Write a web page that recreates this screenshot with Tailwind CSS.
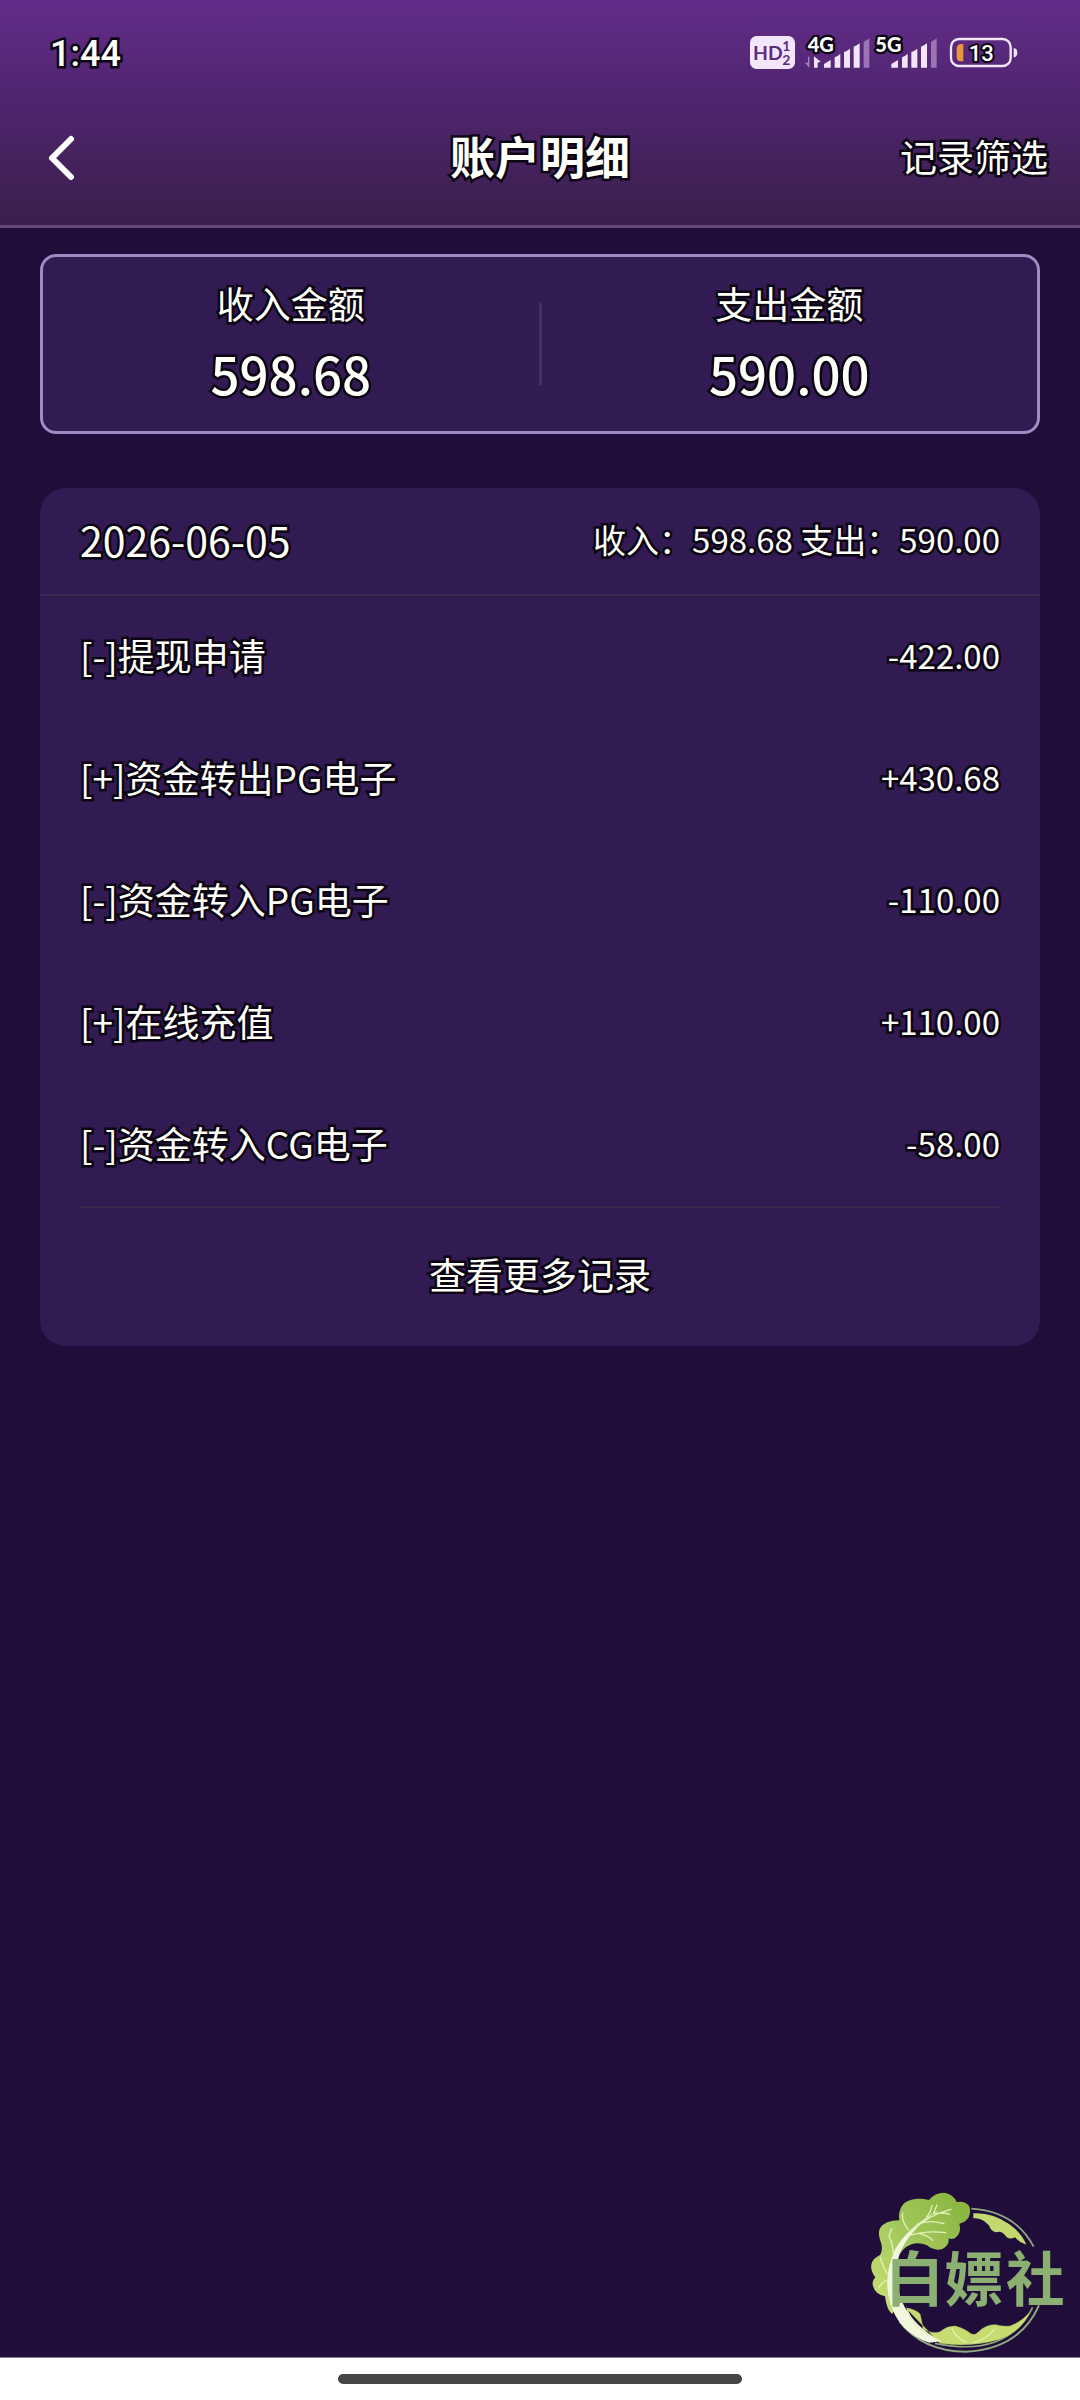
<!DOCTYPE html>
<html lang="zh-CN">
<head>
    <meta charset="UTF-8">
    <meta name="viewport" content="width=device-width, initial-scale=1.0">
    <title>账户明细</title>
    <script src="https://cdn.jsdelivr.net/npm/@tailwindcss/browser@4"></script>
</head>
<body class="bg-[#210d3a] text-[#fffffa] font-['Noto_Sans_CJK_SC',sans-serif]">
<div class="relative min-h-screen flex flex-col [-webkit-text-stroke:5px_#0b0612] [paint-order:stroke_fill] [stroke-linejoin:round]">

    <header class="bg-linear-to-b from-[#622d8a] via-[#4d246b] to-[#3a1f4c] border-b-3 border-[#62467b]">
        <!-- status bar -->
        <div class="h-[90px] flex items-start justify-between pl-[50px] pr-[50px]">
            <span class="mt-8 text-[36px] leading-[44px] font-medium font-[Roboto,sans-serif]">1:44</span>
            <svg class="mt-5 w-[290px] h-[60px] [-webkit-text-stroke:0px]" viewBox="0 0 870 180" fill="#f3e6fa" font-family="Lato, sans-serif" font-weight="700">
                <rect x="30" y="48" width="135" height="99" rx="20"/>
                <g fill="#5b2c7e">
                    <text x="39" y="119" font-size="58">HD</text>
                    <text x="127" y="92" font-size="42">1</text>
                    <text x="127" y="135" font-size="42">2</text>
                </g>
                <!-- data arrows -->
                <path d="M208 110v33l-13-15h9v-18z" fill="#a583bd"/>
                <path d="M222 143v-34l20 16-9 3v15z"/>
                <path d="M252 143v-11l20-12v23zM284 143v-31q9-3 17-11v42zM312 143V96q9-3 18-10v57zM341 143V80q9-3 18-10v73z"/>
                <path d="M371 143V65q8-2 17-10v88z" fill="#9b74b6"/>
                <path d="M454 143v-11l20-12v23zM486 143v-31q9-3 17-11v42zM514 143V96q9-3 18-10v57zM543 143V80q9-3 18-10v73z"/>
                <path d="M573 143V65q8-2 17-10v88z" fill="#9b74b6"/>
                <g fill="#fff" stroke="#0b0612" stroke-width="14" stroke-linejoin="round" paint-order="stroke">
                    <text x="203" y="95" font-size="60" font-weight="900">4G</text>
                    <text x="406" y="95" font-size="60" font-weight="900">5G</text>
                </g>
                <!-- battery -->
                <rect x="633" y="57" width="179" height="81" rx="24" fill="none" stroke="#f3e6fa" stroke-width="7"/>
                <path d="M821 84q11 1 11 14t-11 14z"/>
                <path d="M662 72h8v52h-8q-12-2-12-14V86q0-12 12-14z" fill="#e9973b"/>
                <text x="686" y="122" font-size="66" font-family="Roboto, sans-serif" font-weight="500" fill="#fff" stroke="#0b0612" stroke-width="12" stroke-linejoin="round" paint-order="stroke">13</text>
            </svg>
        </div>
        <!-- nav bar -->
        <div class="h-[135px] grid grid-cols-[1fr_auto_1fr] items-center px-8 pb-1">
            <button class="justify-self-start w-15 h-15 pl-4 pt-1" aria-label="返回">
                <svg class="w-[28px] h-[48px]" viewBox="0 0 28 48" fill="none" stroke="#fff" stroke-width="6" stroke-linecap="round" stroke-linejoin="round">
                    <path d="M23 5L4 24l19 19"/>
                </svg>
            </button>
            <h1 class="text-[45px] leading-[60px] font-bold">账户明细</h1>
            <button class="justify-self-end text-[37px] leading-[54px]">记录筛选</button>
        </div>
    </header>

    <main class="flex-1 px-10 pt-[26px]">
        <!-- totals -->
        <section class="h-[180px] flex items-center rounded-2xl border-3 border-[#a28ac2] bg-[#321a53] text-center">
            <div class="flex-1 pb-1">
                <p class="text-[37px] leading-[54px]">收入金额</p>
                <p class="mt-2 text-[51px] leading-[70px] font-medium">598.68</p>
            </div>
            <div class="w-[3px] h-[84px] rounded-full bg-[#442e65]"></div>
            <div class="flex-1 pb-1">
                <p class="text-[37px] leading-[54px]">支出金额</p>
                <p class="mt-2 text-[51px] leading-[70px] font-medium">590.00</p>
            </div>
        </section>

        <!-- records of one day -->
        <section class="mt-[54px] rounded-[26px] bg-[#321a53]">
            <div class="h-[108px] px-10 pb-1 flex items-center justify-between border-b-2 border-[#3b2750]">
                <h2 class="text-[41px] leading-[56px]">2026-06-05</h2>
                <p class="text-[33px] leading-[48px]">收入：598.68 支出：590.00</p>
            </div>
            <div class="px-10">
                <ul class="border-b-2 border-[#3a294e] text-[37px] leading-[54px]">
                    <li class="h-[122px] pb-1 flex items-center justify-between">
                        <span>[-]提现申请</span>
                        <span class="text-[33px]">-422.00</span>
                    </li>
                    <li class="h-[122px] pb-1 flex items-center justify-between">
                        <span>[+]资金转出PG电子</span>
                        <span class="text-[33px]">+430.68</span>
                    </li>
                    <li class="h-[122px] pb-1 flex items-center justify-between">
                        <span>[-]资金转入PG电子</span>
                        <span class="text-[33px]">-110.00</span>
                    </li>
                    <li class="h-[122px] pb-1 flex items-center justify-between">
                        <span>[+]在线充值</span>
                        <span class="text-[33px]">+110.00</span>
                    </li>
                    <li class="h-[122px] pb-1 flex items-center justify-between">
                        <span>[-]资金转入CG电子</span>
                        <span class="text-[33px]">-58.00</span>
                    </li>
                </ul>
                <button class="w-full h-[138px] pb-1 text-[37px]">查看更多记录</button>
            </div>
        </section>
    </main>

    <!-- cabbage badge -->
    <svg class="absolute right-0 bottom-[43px] w-[220px] h-[177px] [-webkit-text-stroke:0px]" viewBox="0 0 660 531">
        <defs>
            <linearGradient id="leaf" x1="1" y1="0" x2="0" y2="1">
                <stop offset="0" stop-color="#86b23c"/>
                <stop offset=".5" stop-color="#a3c85b"/>
                <stop offset="1" stop-color="#cbe277"/>
            </linearGradient>
        </defs>
        <!-- rings -->
        <g fill="none" stroke="#91a982" stroke-width="5">
            <path d="M334 86Q465 94 521 200"/>
            <path d="M118 424Q190 515 318 515Q478 508 537 376" stroke-width="6"/>
            <path d="M225 490Q440 535 518 382"/>
        </g>
        <path d="M340 100Q395 96 447 132Q484 158 499 194Q479 188 465 172Q449 180 439 170Q425 150 409 157Q391 153 388 137Q365 112 340 115z" fill="#c3d96f"/>
        <!-- lower leaf -->
        <path d="M138 384Q166 388 180 402Q184 420 190 447Q216 463 239 456Q260 438 284 438Q302 441 324 455Q342 471 354 457Q376 434 405 434Q435 441 451 438Q484 426 510 397Q482 456 418 478Q340 502 240 490z" fill="#c6dc70" stroke="#8faf4c" stroke-width="2"/>
        <!-- upper leaf -->
        <path d="M96 402Q80 390 75 349Q42 341 38 313Q36 302 46 292Q29 269 35 250Q38 236 60 225Q69 212 64 191Q52 163 60 145Q74 121 118 121Q113 89 134 68Q164 49 207 60Q225 38 252 38Q280 42 290 66Q314 62 327 77Q334 94 326 112Q316 128 298 131Q306 161 284 175Q273 180 266 174Q269 196 247 207Q224 214 201 196Q177 186 154 193Q126 204 108 240Q86 303 112 380z" fill="url(#leaf)"/>
        <!-- stem and veins -->
        <path d="M240 88Q141 144 106 207Q69 286 88 360Q113 457 208 488L244 484Q159 437 126 365Q93 278 125 207Q160 140 240 88z" fill="#f1f7dd"/>
        <g fill="none" stroke="#e4f0ba" stroke-width="4" stroke-linecap="round">
            <path d="M150 156Q205 105 273 88M200 113Q213 94 216 77M221 100L231 75M220 101Q250 96 269 103M172 133Q207 118 252 131M143 168Q200 150 257 158M176 160Q204 166 218 181M145 149Q123 122 128 99M101 224Q96 182 87 169L94 147M81 280Q63 247 61 232M79 302Q62 308 57 324"/>
            <path d="M142 391Q157 435 208 467M276 447Q289 474 319 487M402 448Q381 478 341 487"/>
        </g>
        <g fill="#8bb071" font-size="176" font-weight="700" font-family="Noto Sans CJK SC, sans-serif">
            <text x="76" y="362">白</text>
            <text x="254" y="362">嫖</text>
            <text x="438" y="362">社</text>
        </g>
    </svg>

    <footer class="h-[43px] bg-white border-t border-[#8e7d9b] flex justify-center pt-4">
        <div class="w-[404px] h-[10px] rounded-full bg-[#464646]"></div>
    </footer>
</div>
</body>
</html>
